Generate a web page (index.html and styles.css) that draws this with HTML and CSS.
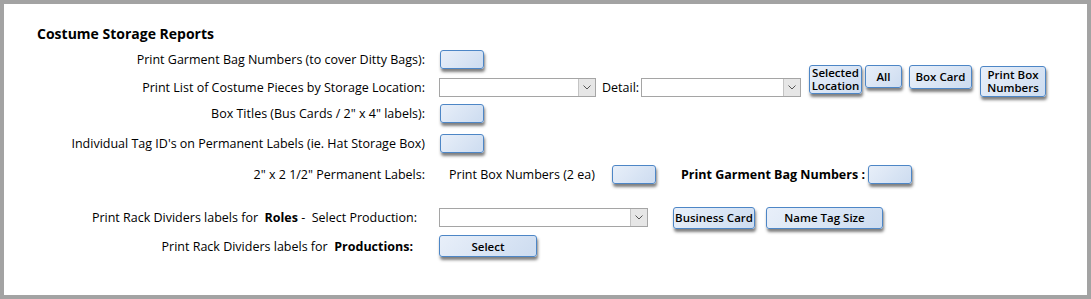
FILE: index.html
```html
<!DOCTYPE html>
<html lang="en">
<head>
  <meta charset="UTF-8" />
  <title>Costume Storage Reports</title>
  <link rel="stylesheet" href="styles.css">
</head>
<body>
  <div class="panel">
    <h2 class="title">Costume Storage Reports</h2>

    <!-- Garment bags -->
    <div class="row row-bags">
      <div class="label">Print Garment Bag Numbers (to cover Ditty Bags):</div>
      <div class="controls"><button class="btn btn-blank"></button></div>
    </div>

    <!-- Costume pieces by location -->
    <div class="row row-location">
      <div class="label">Print List of Costume Pieces by Storage Location:</div>
      <div class="controls">
        <div class="combo combo-location"><span class="combo-arrow"><svg width="8" height="5" viewBox="0 0 8 5"><path d="M0.5 0.5 L4 4 L7.5 0.5" fill="none" stroke="#555" stroke-width="1"/></svg></span></div>
        <span class="detail-label">Detail:</span>
        <div class="combo combo-detail"><span class="combo-arrow"><svg width="8" height="5" viewBox="0 0 8 5"><path d="M0.5 0.5 L4 4 L7.5 0.5" fill="none" stroke="#555" stroke-width="1"/></svg></span></div>
        <div class="btn-group">
          <button class="btn btn-selected">Selected<br>Location</button>
          <button class="btn btn-all">All</button>
          <button class="btn btn-boxcard">Box Card</button>
          <button class="btn btn-boxnumbers">Print Box<br>Numbers</button>
        </div>
      </div>
    </div>

    <!-- Box titles -->
    <div class="row row-titles">
      <div class="label">Box Titles (Bus Cards / 2" x 4" labels):</div>
      <div class="controls"><button class="btn btn-blank"></button></div>
    </div>

    <!-- Tag IDs -->
    <div class="row row-tags">
      <div class="label">Individual Tag ID's on Permanent Labels (ie. Hat Storage Box)</div>
      <div class="controls"><button class="btn btn-blank"></button></div>
    </div>

    <!-- Permanent labels -->
    <div class="row row-permanent">
      <div class="label">2" x 2 1/2" Permanent Labels:</div>
      <div class="controls controls-permanent">
        <span class="perm-text">Print Box Numbers (2 ea)</span>
        <button class="btn btn-blank"></button>
        <span class="perm-text perm-bold">Print Garment Bag Numbers :</span>
        <button class="btn btn-blank btn-bagnum"></button>
      </div>
    </div>

    <!-- Rack dividers: roles -->
    <div class="row row-roles">
      <div class="label label-roles">Print Rack Dividers labels for&nbsp; <b>Roles</b> -&nbsp; Select Production:</div>
      <div class="controls">
        <div class="combo combo-production"><span class="combo-arrow"><svg width="8" height="5" viewBox="0 0 8 5"><path d="M0.5 0.5 L4 4 L7.5 0.5" fill="none" stroke="#555" stroke-width="1"/></svg></span></div>
        <button class="btn btn-business">Business Card</button>
        <button class="btn btn-nametag">Name Tag Size</button>
      </div>
    </div>

    <!-- Rack dividers: productions -->
    <div class="row row-productions">
      <div class="label label-productions">Print Rack Dividers labels for&nbsp; <b>Productions:</b></div>
      <div class="controls"><button class="btn btn-select">Select</button></div>
    </div>
  </div>
</body>
</html>
```

FILE: styles.css
```css
body {
  margin: 0;
  font-family: "Open Sans", "Noto Sans", sans-serif;
  font-size: 12.5px;
  color: #000;
}

.panel {
  box-sizing: border-box;
  width: 1091px;
  height: 299px;
  border: 4px solid #a3a3a3;
  background: #fff;
}

.title {
  margin: 20px 0 0 33px;
  height: 20px;
  line-height: 20px;
  font-size: 14px;
  font-weight: bold;
}

.row {
  display: flex;
  align-items: center;
}

.label {
  width: 421px;
  flex-shrink: 0;
  text-align: right;
  white-space: nowrap;
}

.label b {
  font-weight: bold;
}

.label-roles {
  box-sizing: border-box;
  padding-right: 8px;
}

.label-productions {
  box-sizing: border-box;
  padding-right: 12px;
}

.controls {
  display: flex;
  align-items: center;
  margin-left: 14px;
}

.row-bags { height: 24px; margin-top: 3px; }
.row-location { height: 22px; margin-top: 5px; }
.row-titles { height: 24px; margin-top: 3px; }
.row-tags { height: 24px; margin-top: 6px; }
.row-permanent { height: 24px; margin-top: 7px; }
.row-roles { height: 23px; margin-top: 20px; }
.row-productions { height: 24px; margin-top: 5px; }

/* buttons */
.btn {
  box-sizing: border-box;
  padding: 0;
  font-family: inherit;
  font-size: 11.5px;
  font-weight: 600;
  line-height: 13px;
  color: #000;
  border: 1px solid #4d86c6;
  border-radius: 3px;
  background: linear-gradient(135deg, #e8eff9, #cddcf0);
  box-shadow: 1px 3px 3px rgba(0, 0, 0, 0.5);
}

.btn-blank {
  width: 44px;
  height: 19px;
  margin-left: 1px;
}

.btn-group {
  display: flex;
  align-items: flex-start;
  align-self: flex-start;
  margin-top: -13px;
  margin-left: 8px;
}

.btn-selected { width: 53px; height: 29px; }
.btn-all { width: 37px; height: 23px; margin-left: 3px; }
.btn-boxcard { width: 63px; height: 24px; margin-left: 7px; }
.btn-boxnumbers { width: 66px; height: 31px; margin-left: 8px; margin-top: 1px; }

.btn-business { width: 82px; height: 22px; margin-left: 25px; }
.btn-nametag { width: 117px; height: 22px; margin-left: 11px; }
.btn-select { width: 98px; height: 22px; }

/* combo boxes */
.combo {
  box-sizing: border-box;
  display: flex;
  justify-content: flex-end;
  height: 19px;
  border: 1px solid #a5a5a5;
  background: #fff;
}

.combo-arrow {
  display: flex;
  align-items: center;
  justify-content: center;
  width: 16px;
  background: #e6e6e6;
  border-left: 1px solid #c4c4c4;
}

.combo-location { width: 157px; }
.combo-detail { width: 160px; }
.combo-production { width: 209px; }

.detail-label {
  width: 36px;
  margin: 0 3px 0 6px;
  white-space: nowrap;
}

/* permanent labels row */
.controls-permanent {
  margin-left: 24px;
}

.perm-text {
  width: 162px;
  white-space: nowrap;
}

.perm-bold {
  width: 186px;
  margin-left: 25px;
  font-weight: bold;
}
```
